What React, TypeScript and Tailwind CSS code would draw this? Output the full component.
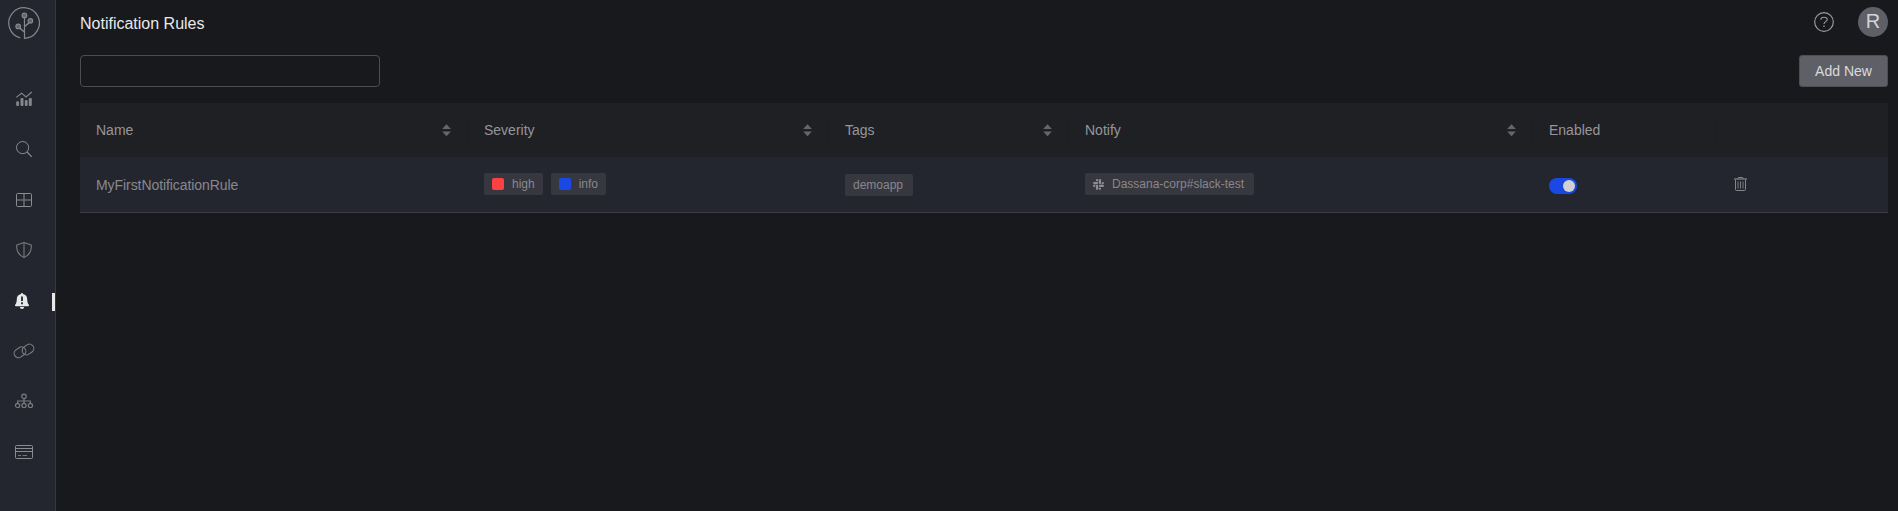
import React from "react";

const Logo = () => (
  <svg width="32" height="32" viewBox="0 0 32 32" fill="none" stroke="#85868b" strokeWidth="1.2">
    <path d="M12.2 30.8 A15.3 15.3 0 1 1 16.5 31.3 V11" />
    <path d="M16.5 25 L11.8 21.2 M16.5 19.5 L21 15.8" strokeWidth="1.5" />
    <g fill="#63656b" strokeWidth="1.2">
      <circle cx="16.4" cy="8.4" r="2.3" />
      <circle cx="22.4" cy="13.8" r="2.3" />
      <circle cx="10.2" cy="19.4" r="2.3" />
    </g>
  </svg>
);

const ChartIcon = () => (
  <svg width="20" height="20" viewBox="0 0 20 20" fill="none" stroke="#85868c">
    <path d="M2.2 8.4 L7.6 4.2 L12 8 L17.8 3" strokeWidth="1.1" />
    <g fill="#85868c" stroke="none">
      <rect x="2.2" y="12.2" width="2.8" height="4.8" rx="1" />
      <rect x="6.5" y="9" width="3" height="8" rx="1" />
      <rect x="10.8" y="11" width="2.8" height="6" rx="1" />
      <rect x="14.8" y="9" width="3" height="8" rx="1" />
    </g>
  </svg>
);

const SearchIcon = () => (
  <svg width="20" height="20" viewBox="0 0 20 20" fill="none" stroke="#8b8c92" strokeWidth="1">
    <circle cx="8.6" cy="8.6" r="6.1" />
    <path d="M13 13 L17.8 17.8" strokeWidth="1.2" />
  </svg>
);

const GridIcon = () => (
  <svg width="20" height="20" viewBox="0 0 20 20" fill="none" stroke="#8b8c92" strokeWidth="1">
    <rect x="2.5" y="3.5" width="15" height="13" rx="1" />
    <path d="M10 4v12 M3 10h14" strokeWidth="1.7" stroke="#66686f" />
  </svg>
);

const ShieldIcon = () => (
  <svg width="20" height="20" viewBox="0 0 20 20" fill="none" stroke="#7b7c82" strokeWidth="1.1">
    <path d="M10 2.4 L17.2 5 C18 10.5 14.8 15.6 10 17.6 C5.2 15.6 2 10.5 2.8 5 Z" strokeLinejoin="round" />
    <path d="M10 2.6v14.8" strokeWidth="1.4" stroke="#66686f" />
  </svg>
);

const BellIcon = () => (
  <svg width="20" height="20" viewBox="0 0 20 20">
    <path
      d="M8 2 C8.6 2 9 2.4 9 3 C11.8 3.5 13.2 5.5 13.2 8 C13.2 11.2 13.9 12.4 14.7 13.5 C15.3 14.4 15 15.2 14.1 15.2 H1.9 C1 15.2 .7 14.4 1.3 13.5 C2.1 12.4 2.8 11.2 2.8 8 C2.8 5.5 4.2 3.5 7 3 C7 2.4 7.4 2 8 2Z"
      fill="#e8e8e9"
    />
    <path d="M5.9 16h4.2a2.1 2.1 0 0 1-4.2 0Z" fill="#e8e8e9" />
    <path d="M8 5.4v4.6 M8 11.2v2" stroke="#23252e" strokeWidth="1.8" />
  </svg>
);

const LinkIcon = () => (
  <svg width="22" height="20" viewBox="0 0 22 20" fill="none" stroke="#7d7e84" strokeWidth="1.1">
    <rect x="0.8" y="7" width="12.4" height="8.6" rx="4.3" transform="rotate(-35 7 11.3)" />
    <rect x="8.8" y="4.2" width="12.4" height="8.6" rx="4.3" transform="rotate(-35 15 8.5)" />
  </svg>
);

const TreeIcon = () => (
  <svg width="20" height="20" viewBox="0 0 20 20" fill="none" stroke="#7b7c82" strokeWidth="1.2">
    <circle cx="10" cy="5.3" r="2.2" />
    <circle cx="3.6" cy="14.4" r="2.1" />
    <circle cx="10" cy="14.4" r="2.1" />
    <circle cx="16.4" cy="14.4" r="2.1" />
    <path d="M10 7.5v4.8 M3.7 12.2V10h12.6v2.2" />
  </svg>
);

const CardIcon = () => (
  <svg width="20" height="20" viewBox="0 0 20 20" fill="none" stroke="#8b8c92" strokeWidth="1">
    <rect x="1.5" y="3.5" width="17" height="13" rx="1" />
    <path d="M2 6.5h16 M2 9.5h16" />
    <path d="M4 13.5h3 M8.5 13.5h4.5" stroke="#75767c" />
  </svg>
);

const SlackIcon = () => (
  <svg width="11" height="11" viewBox="0 0 24 24" fill="#8d8d92" className="shrink-0">
    <path d="M5.042 15.165a2.528 2.528 0 0 1-2.52 2.523A2.528 2.528 0 0 1 0 15.165a2.527 2.527 0 0 1 2.522-2.52h2.52v2.52zM6.313 15.165a2.527 2.527 0 0 1 2.521-2.52 2.527 2.527 0 0 1 2.521 2.52v6.313A2.528 2.528 0 0 1 8.834 24a2.528 2.528 0 0 1-2.521-2.522v-6.313zM8.834 5.042a2.528 2.528 0 0 1-2.521-2.52A2.528 2.528 0 0 1 8.834 0a2.528 2.528 0 0 1 2.521 2.522v2.52H8.834zM8.834 6.313a2.528 2.528 0 0 1 2.521 2.521 2.528 2.528 0 0 1-2.521 2.521H2.522A2.528 2.528 0 0 1 0 8.834a2.528 2.528 0 0 1 2.522-2.521h6.312zM18.956 8.834a2.528 2.528 0 0 1 2.522-2.521A2.528 2.528 0 0 1 24 8.834a2.528 2.528 0 0 1-2.522 2.521h-2.522V8.834zM17.688 8.834a2.528 2.528 0 0 1-2.523 2.521 2.527 2.527 0 0 1-2.52-2.521V2.522A2.527 2.527 0 0 1 15.165 0a2.528 2.528 0 0 1 2.523 2.522v6.312zM15.165 18.956a2.528 2.528 0 0 1 2.523 2.522A2.528 2.528 0 0 1 15.165 24a2.527 2.527 0 0 1-2.52-2.522v-2.522h2.52zM15.165 17.688a2.527 2.527 0 0 1-2.52-2.523 2.526 2.526 0 0 1 2.52-2.52h6.313A2.527 2.527 0 0 1 24 15.165a2.528 2.528 0 0 1-2.522 2.523h-6.313z" />
  </svg>
);

const TrashIcon = () => (
  <svg width="13" height="14" viewBox="0 0 13 14" fill="none" stroke="#85868c" strokeWidth="1">
    <path d="M0 2h13" strokeWidth="1.2" />
    <path d="M3.6 1.8 L4.4 .5 H8.6 L9.4 1.8" />
    <path d="M1.5 2.5v10a1 1 0 0 0 1 1h8a1 1 0 0 0 1-1V2.5" />
    <path d="M4 4.5v7 M6.5 4.5v7 M9 4.5v7" strokeWidth=".9" />
  </svg>
);

const Sorter = () => (
  <svg width="9" height="13" viewBox="0 0 9 13" fill="#66676a">
    <path d="M4.5 0.3 L8.8 5 H0.2Z" />
    <path d="M4.5 12.3 L8.8 7.6 H0.2Z" />
  </svg>
);

const navItems = [
  { name: "chart", icon: <ChartIcon /> },
  { name: "search", icon: <SearchIcon /> },
  { name: "grid", icon: <GridIcon /> },
  { name: "shield", icon: <ShieldIcon /> },
  { name: "bell", icon: <BellIcon />, active: true },
  { name: "link", icon: <LinkIcon /> },
  { name: "tree", icon: <TreeIcon /> },
  { name: "card", icon: <CardIcon /> },
];

const columns = [
  { title: "Name", sortable: true },
  { title: "Severity", sortable: true },
  { title: "Tags", sortable: true },
  { title: "Notify", sortable: true },
  { title: "Enabled", sortable: false },
  { title: "", sortable: false },
];

const GRID = "grid grid-cols-[388px_361px_240px_464px_184px_171px]";

const Tag = ({ children, className = "" }: { children: React.ReactNode; className?: string }) => (
  <span className={`flex h-[22px] items-center gap-2 rounded-xs bg-[#36373f] px-2 text-xs text-[#88888c] ${className}`}>
    {children}
  </span>
);

export default function App() {
  return (
    <div className="flex h-[511px] w-full overflow-hidden bg-[#18191d] font-['Liberation_Sans',Arial,sans-serif]">
      <aside className="flex w-14 shrink-0 flex-col border-r border-[#36373f] bg-[#23262f]">
        <div className="h-[39px] pt-[7px] pl-2">
          <Logo />
        </div>
        <nav className="mt-[34.8px] flex flex-col">
          {navItems.map((item) => (
            <div key={item.name} className="flex h-[50.4px] items-center justify-between">
              <span className="flex w-12 justify-center">{item.icon}</span>
              {item.active && <span className="mt-0.5 h-[18px] w-[3px] bg-[#e8e8e9]" />}
            </div>
          ))}
        </nav>
      </aside>
      <div className="mt-[55px] w-1.5 shrink-0 bg-linear-to-r from-[#1a1b1e] to-[#18191d]" />
      <main className="flex grow flex-col pr-2.5 pl-[18px]">
        <header className="flex h-[55px] justify-between">
          <h1 className="pt-3 text-base leading-6 text-[#e8e8e9]">Notification Rules</h1>
          <div className="flex pt-[7px]">
            <svg width="20" height="20" viewBox="0 0 20 20" fill="none" stroke="#98999b" className="mt-[5px] mr-6">
              <circle cx="10" cy="10" r="9.3" strokeWidth="1.2" />
              <path d="M6.7 7.6 C6.9 6 8.3 5.2 10 5.2 C11.9 5.2 13.3 6.1 13.3 7.6 C13.3 9.7 10 9.6 10 12" strokeWidth="1.1" />
              <path d="M10 13.6v1.4" strokeWidth="1.4" />
            </svg>
            <span className="flex size-[30px] items-center justify-center rounded-full bg-[#5f6067] pb-0.5 text-xl leading-none text-[#d4d4d6]">
              R
            </span>
          </div>
        </header>
        <div className="flex h-8 justify-between">
          <input className="w-[300px] rounded-sm border border-[#4c4d51] bg-transparent px-3 text-sm text-[#e8e8e9] outline-none" />
          <button className="w-[89px] rounded-[3px] border border-[#4d4e55] bg-[#5f6067] text-sm text-[#dadadc]">Add New</button>
        </div>
        <section className="mt-4 text-sm">
          <div className={`${GRID} h-[54px] items-center bg-[#1f2024]`}>
            {columns.map((c, i) => (
              <div
                key={i}
                className={`flex h-[22px] items-center justify-between pr-4 pl-4 ${i < 5 ? "border-r border-[#1c1d20]" : ""}`}
              >
                <span className="text-[#96969a]">{c.title}</span>
                {c.sortable && <Sorter />}
              </div>
            ))}
          </div>
          <div className={`${GRID} h-14 items-center border-b border-[#3a3b44] bg-[#23262f]`}>
            <div className="pl-4 tracking-[-0.07px] text-[#88898d]">MyFirstNotificationRule</div>
            <div className="flex gap-2 pb-px pl-4">
              <Tag className="w-[59px]">
                <span className="size-3 rounded-xs bg-[#fc4144]" />
                high
              </Tag>
              <Tag className="w-[55px]">
                <span className="size-3 rounded-xs bg-[#1a48e4]" />
                info
              </Tag>
            </div>
            <div className="flex pt-px pl-4">
              <Tag className="w-[68px]">demoapp</Tag>
            </div>
            <div className="flex pb-px pl-4">
              <Tag className="w-[169px]">
                <SlackIcon />
                <span className="whitespace-nowrap">Dassana-corp#slack-test</span>
              </Tag>
            </div>
            <div className="flex pt-[3px] pl-4">
              <span className="flex h-4 w-7 items-center justify-end rounded-full bg-[#1a48e4] pr-0.5">
                <span className="size-3 rounded-full bg-[#d1d1d3]" />
              </span>
            </div>
            <div className="flex pb-px pl-[17px]">
              <TrashIcon />
            </div>
          </div>
        </section>
      </main>
    </div>
  );
}
